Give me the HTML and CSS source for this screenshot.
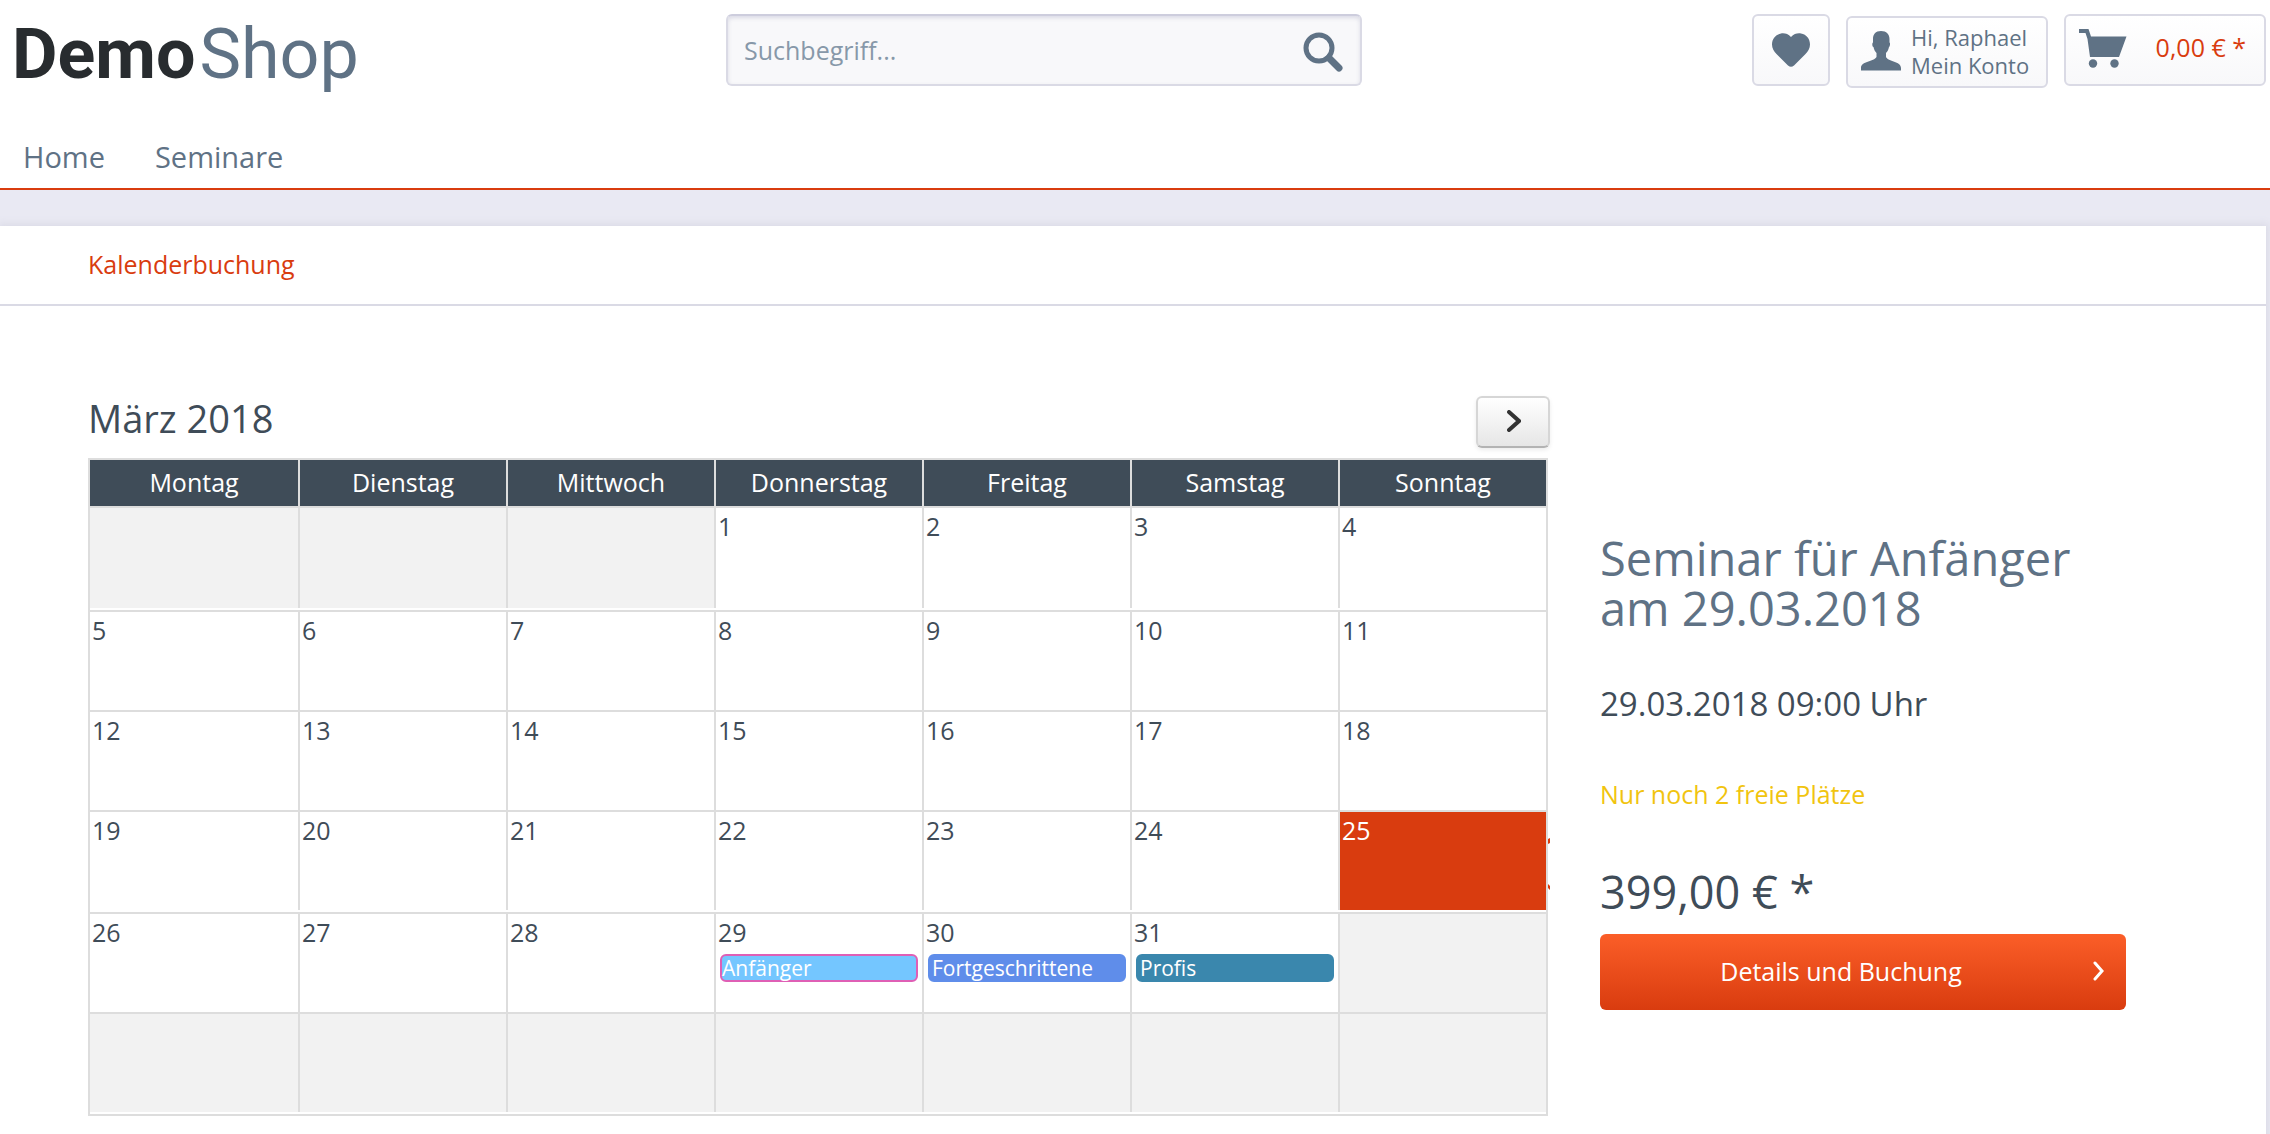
FILE: index.html
```html
<!DOCTYPE html>
<html lang="de">
<head>
<meta charset="utf-8">
<meta name="viewport" content="width=device-width, initial-scale=1">
<title>DemoShop – Kalenderbuchung</title>
<link rel="stylesheet" href="styles.css">
</head>
<body>
<header class="header">
  <div class="header-top">
    <a class="logo" href="#"><span class="logo-demo">Demo</span><span class="logo-shop">Shop</span></a>
    <form class="search" role="search">
      <input class="search-input" type="search" placeholder="Suchbegriff..." aria-label="Suchbegriff">
      <button class="search-button" type="button" aria-label="Suchen">
        <svg width="40" height="40" viewBox="0 0 40 40"><circle cx="16" cy="16" r="13" fill="none" stroke="currentColor" stroke-width="5"/><path d="M26 26L36 36" stroke="currentColor" stroke-width="7" stroke-linecap="round"/></svg>
      </button>
    </form>
    <div class="actions">
      <a class="action action-wish" href="#" aria-label="Merkzettel">
        <svg width="38" height="34" viewBox="0 0 38 34"><path d="M19 4C22 .5 26 0 29 .5C34.500 1.500 38 6 38 11.500C38 15.500 36 18.500 33.500 21L22 32.500Q19 35 16 32.500L4.500 21C2 18.500 0 15.500 0 11.500C0 6 3.500 1.500 9 .5C12 0 16 .5 19 4Z" fill="currentColor"/></svg>
      </a>
      <a class="action action-account" href="#">
        <svg width="40" height="40" viewBox="0 0 40 40"><path d="M20 0C25.500 0 28.500 3.500 28.500 8V11.500C29.500 12 29 15.500 28 16C27.500 18.500 26.500 20.500 25 22V26C27 31 40 30 40 37V39.500H0V37C0 30 13 31 15.500 26V22C14 20.500 13 18.500 12.500 16C11 15.500 11 12 12 11.500V8C12 3.500 14.500 0 20 0Z" fill="currentColor"/></svg>
        <span class="account-text">Hi, Raphael<br>Mein Konto</span>
      </a>
      <a class="action action-cart" href="#" aria-label="Warenkorb">
        <svg width="48" height="40" viewBox="0 0 48 40"><path d="M0 0H9.500L12 7.500H47.500L40 28H11L8.500 10L6.500 4H0Z" fill="currentColor"/><circle cx="14" cy="34.500" r="4.200" fill="currentColor"/><circle cx="35.500" cy="34.500" r="4.200" fill="currentColor"/></svg>
        <span class="cart-amount">0,00 € *</span>
      </a>
    </div>
  </div>
  <nav class="nav"><a href="#">Home</a><a href="#">Seminare</a></nav>
</header>
<main class="page">
  <div class="breadcrumb"><a href="#">Kalenderbuchung</a></div>
  <div class="content">
    <section class="calendar">
      <div class="calendar-head">
        <h2 class="calendar-title">März 2018</h2>
        <button class="next" type="button" aria-label="Nächster Monat"><svg width="14" height="22" viewBox="0 0 14 22"><path d="M2 2L12 11L2 20" fill="none" stroke="currentColor" stroke-width="4" stroke-linecap="round"/></svg></button>
      </div>
      <table class="month">
        <thead><tr><th>Montag</th><th>Dienstag</th><th>Mittwoch</th><th>Donnerstag</th><th>Freitag</th><th>Samstag</th><th>Sonntag</th></tr></thead>
        <tbody>
          <tr class="first"><td><div class="day other"></div></td><td><div class="day other"></div></td><td><div class="day other"></div></td><td><div class="day">1</div></td><td><div class="day">2</div></td><td><div class="day">3</div></td><td><div class="day">4</div></td></tr>
          <tr><td><div class="day">5</div></td><td><div class="day">6</div></td><td><div class="day">7</div></td><td><div class="day">8</div></td><td><div class="day">9</div></td><td><div class="day">10</div></td><td><div class="day">11</div></td></tr>
          <tr><td><div class="day">12</div></td><td><div class="day">13</div></td><td><div class="day">14</div></td><td><div class="day">15</div></td><td><div class="day">16</div></td><td><div class="day">17</div></td><td><div class="day">18</div></td></tr>
          <tr class="spaced"><td><div class="day">19</div></td><td><div class="day">20</div></td><td><div class="day">21</div></td><td><div class="day">22</div></td><td><div class="day">23</div></td><td><div class="day">24</div></td><td><div class="day today">25<svg class="today-ring" width="2" height="52" viewBox="0 0 2 52" aria-hidden="true"><path d="M0 1L2 0V5L0 6ZM0 46L2 48V52L0 50Z" fill="currentColor"/></svg></div></td></tr>
          <tr><td><div class="day">26</div></td><td><div class="day">27</div></td><td><div class="day">28</div></td>
            <td><div class="day">29<a class="event event-beginner" href="#">Anfänger</a></div></td>
            <td><div class="day">30<a class="event event-advanced" href="#">Fortgeschrittene</a></div></td>
            <td><div class="day">31<a class="event event-pro" href="#">Profis</a></div></td>
            <td><div class="day other"></div></td></tr>
          <tr class="spaced"><td><div class="day other"></div></td><td><div class="day other"></div></td><td><div class="day other"></div></td><td><div class="day other"></div></td><td><div class="day other"></div></td><td><div class="day other"></div></td><td><div class="day other"></div></td></tr>
        </tbody>
      </table>
    </section>
    <aside class="detail">
      <h1 class="detail-title">Seminar für Anfänger<br>am 29.03.2018</h1>
      <p class="detail-date">29.03.2018 09:00 Uhr</p>
      <p class="detail-stock">Nur noch 2 freie Plätze</p>
      <p class="detail-price">399,00 € *</p>
      <a class="book" href="#"><span class="book-label">Details und Buchung</span><svg width="12" height="20" viewBox="0 0 12 20"><path d="M2 2L9 10L2 18" fill="none" stroke="currentColor" stroke-width="3" stroke-linecap="round"/></svg></a>
    </aside>
  </div>
</main>
</body>
</html>
```
FILE: styles.css
```css
* { box-sizing: border-box; }
body {
  margin: 0;
  background: #e9e9f3;
  color: #3f4c58;
  font: 25px/36px "Open Sans", "Noto Sans", sans-serif;
}
a { color: inherit; text-decoration: none; }
h1, h2, p { margin: 0; font-weight: 400; }
svg { display: block; flex: none; }

.header { background: #fff; border-bottom: 2px solid #d93c0f; color: #5f7285; }
.header-top {
  display: grid;
  grid-template-columns: 714fr 636fr 904fr;
  align-items: start;
  padding: 14px 4px 0 12px;
}
.logo {
  display: flex;
  align-items: baseline;
  gap: 4px;
  height: 104px;
  font: 70px/80px "Roboto", sans-serif;
}
.logo-demo { font-weight: 700; color: #282c2f; }
.logo-shop { font-weight: 400; }
.search {
  display: flex;
  align-items: center;
  height: 72px;
  padding: 0 17px 0 16px;
  background: #f8f8fa;
  border: 2px solid #dadae5;
  border-top-color: #cdcddd;
  border-radius: 6px;
  box-shadow: inset 0 2px 4px #dadae5;
}
.search-input {
  flex: 1;
  min-width: 0;
  padding: 0;
  border: 0;
  background: none;
  font: inherit;
  color: inherit;
}
.search-input::placeholder { color: #8798a9; opacity: 1; }
.search-button { padding: 4px 0 0; border: 0; background: none; color: inherit; }
.actions { display: flex; justify-content: flex-end; gap: 16px; }
.action {
  display: flex;
  align-items: center;
  height: 72px;
  border: 2px solid #dadae5;
  border-radius: 6px;
  background: linear-gradient(#fff, #f8f8fa);
}
.action-wish { justify-content: center; width: 78px; }
.action-account { width: 202px; margin-top: 2px; padding: 0 0 2px 13px; gap: 10px; font-size: 22px; line-height: 28px; }
.action-cart { justify-content: space-between; width: 202px; padding: 0 18px 2px 13px; }
.cart-amount { color: #d93c0f; padding-bottom: 4px; }
.nav { display: flex; gap: 50px; height: 70px; padding: 19px 23px 0; font-size: 29px; line-height: 40px; }

.page {
  margin: 36px 4px 0 0;
  padding-bottom: 60px;
  background: #fff;
  box-shadow: 0 0 8px 2px #dadae5;
}
.breadcrumb { padding: 20px 88px 22px; border-bottom: 2px solid #dadae5; color: #d93c0f; }
.content {
  display: grid;
  grid-template-columns: 1460fr 526fr;
  gap: 52px;
  padding: 90px 140px 0 88px;
}
.calendar-head { display: flex; justify-content: space-between; height: 62px; margin-right: -2px; }
.calendar-title { font-size: 38px; line-height: 44px; }
.next {
  display: flex;
  align-items: center;
  justify-content: center;
  width: 74px;
  height: 52px;
  padding: 0 0 2px 2px;
  border: 2px solid #d6d6d6;
  border-bottom-color: #b3b3b3;
  border-radius: 6px;
  background: linear-gradient(#fff, #e6e6e6);
  box-shadow: 0 2px 4px rgba(0, 0, 0, .08);
  color: #333;
}
.month {
  width: 100%;
  table-layout: fixed;
  border: 2px solid #ddd;
  border-collapse: separate;
  border-spacing: 0;
}
.month th { height: 46px; padding: 0 0 2px; border-left: 2px solid #ddd; background: #3f4c58; color: #fff; font-weight: 400; }
.month th:first-child { border-left: 0; }
.month td { padding: 0; border-top: 2px solid #ddd; vertical-align: top; }
.day { position: relative; height: 98px; padding: 0 3px 0 2px; border-left: 2px solid #ddd; }
.month td:first-child .day { border-left: 0; }
.first .day { height: 100px; }
.first td, .spaced td { padding-bottom: 2px; }
.other { background: #f2f2f2; }
.today { background: #d93c0f; color: #fff; }
.today-ring { position: absolute; left: 100%; top: 26px; margin-left: 2px; color: #d93c0f; }
.event {
  display: block;
  height: 28px;
  margin: 4px 1px 0 2px;
  padding: 0 2px;
  border: 2px solid;
  border-radius: 6px;
  font-size: 21px;
  line-height: 24px;
}
.event-beginner { padding: 0; background: #74c6ff; border-color: #df5fb5; color: #fff; }
.event-advanced { background: #5f8dea; border-color: #5f8dea; color: #fff; }
.event-pro { background: #3a87ad; border-color: #3a87ad; color: #fff; }

.detail { padding-top: 137px; }
.detail-title { font-size: 47px; line-height: 50px; color: #5f7285; }
.detail-date { margin-top: 47px; font-size: 33px; line-height: 48px; }
.detail-stock { margin-top: 48px; color: #f1c40f; }
.detail-price { margin-top: 50px; font-size: 45px; line-height: 60px; }
.book {
  display: flex;
  align-items: center;
  height: 76px;
  margin-top: 12px;
  padding: 0 21px 2px;
  border-radius: 6px;
  background: linear-gradient(#fb5e28, #d93c0f);
  color: #fff;
}
.book-label { flex: 1; padding-right: 32px; text-align: center; }
```
